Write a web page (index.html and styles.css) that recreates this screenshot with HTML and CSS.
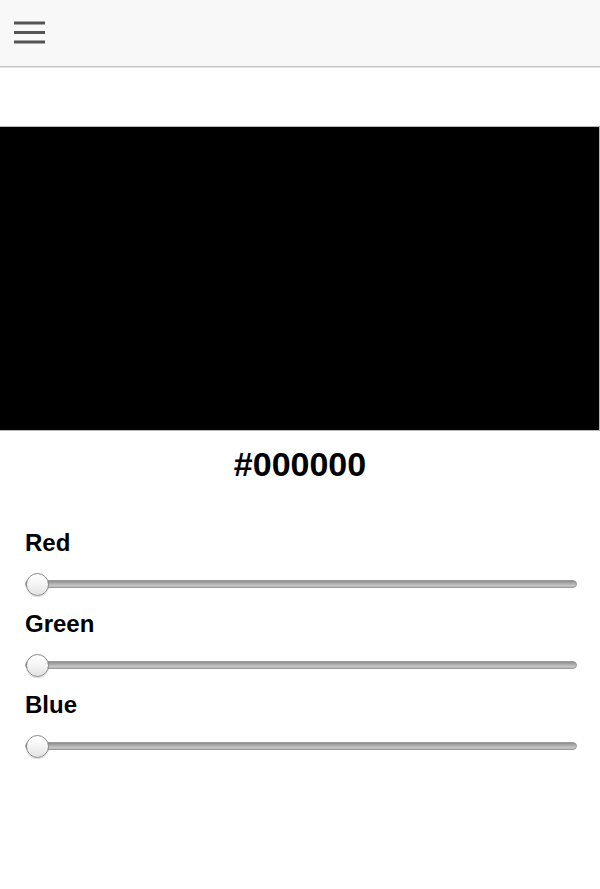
FILE: index.html
```html
<!DOCTYPE html>
<html lang="en">
<head>
<meta charset="utf-8">
<title>Color Picker</title>
<link rel="stylesheet" href="styles.css">
</head>
<body>
<header class="topbar">
  <button class="menu-btn" aria-label="Menu">
    <svg width="31" height="24" viewBox="0 0 31 24" aria-hidden="true">
      <rect x="0" y="0.5" width="31" height="3" fill="#545454"/>
      <rect x="0" y="10" width="31" height="3" fill="#545454"/>
      <rect x="0" y="19.5" width="31" height="3" fill="#545454"/>
    </svg>
  </button>
</header>
<main class="content">
  <div class="swatch"></div>
  <h1 class="hex">#000000</h1>
  <div class="controls">
    <div class="control">
      <label class="label" for="r">Red</label>
      <input class="slider" id="r" type="range" min="0" max="255" value="0">
    </div>
    <div class="control">
      <label class="label" for="g">Green</label>
      <input class="slider" id="g" type="range" min="0" max="255" value="0">
    </div>
    <div class="control">
      <label class="label" for="b">Blue</label>
      <input class="slider" id="b" type="range" min="0" max="255" value="0">
    </div>
  </div>
</main>
</body>
</html>
```

FILE: styles.css
```css
html, body {
  margin: 0;
  padding: 0;
  background: #ffffff;
}
body {
  font-family: "Liberation Sans", Arial, Helvetica, sans-serif;
  color: #000;
}
.topbar {
  height: 66px;
  background: #f8f8f8;
  border-bottom: 1px solid #c4c4c4;
  box-shadow: 0 1px 0 #e4e4e4;
  display: flex;
  align-items: flex-start;
}
.menu-btn {
  margin: 21px 0 0 14px;
  padding: 0;
  border: 0;
  background: transparent;
  width: 31px;
  height: 24px;
  display: block;
}
.menu-btn svg {
  display: block;
}
.content {
  padding-top: 59px;
}
.swatch {
  height: 305px;
  box-sizing: border-box;
  background: #000;
  border: 1px solid #b8b8b8;
  border-left: 0;
}
.hex {
  margin: 14px 0 0;
  font-size: 34px;
  line-height: 38px;
  font-weight: bold;
  text-align: center;
}
.controls {
  padding: 46px 23px 0 25px;
  display: flex;
  flex-direction: column;
  gap: 13px;
}
.control {
  display: flex;
  flex-direction: column;
  gap: 15px;
}
.label {
  display: block;
  font-size: 24px;
  line-height: 27px;
  font-weight: bold;
}
.slider {
  -webkit-appearance: none;
  appearance: none;
  display: block;
  width: 100%;
  height: 26px;
  margin: 0;
  padding: 0;
  background: transparent;
}
.slider::-webkit-slider-runnable-track {
  height: 8px;
  box-sizing: border-box;
  border-radius: 4px;
  border: 1px solid #9a9a9a;
  background: linear-gradient(to bottom, #8e8e8e 0%, #a9a9a9 35%, #c4c4c4 75%, #b8b8b8 100%);
}
.slider::-webkit-slider-thumb {
  -webkit-appearance: none;
  appearance: none;
  width: 23px;
  height: 23px;
  margin-top: -8.5px;
  box-sizing: border-box;
  border-radius: 50%;
  border: 1px solid #8a8a8a;
  background: linear-gradient(to bottom, #ffffff 0%, #f4f4f4 50%, #e2e2e2 100%);
  box-shadow: 0 1px 1px rgba(0,0,0,0.15);
}
```
